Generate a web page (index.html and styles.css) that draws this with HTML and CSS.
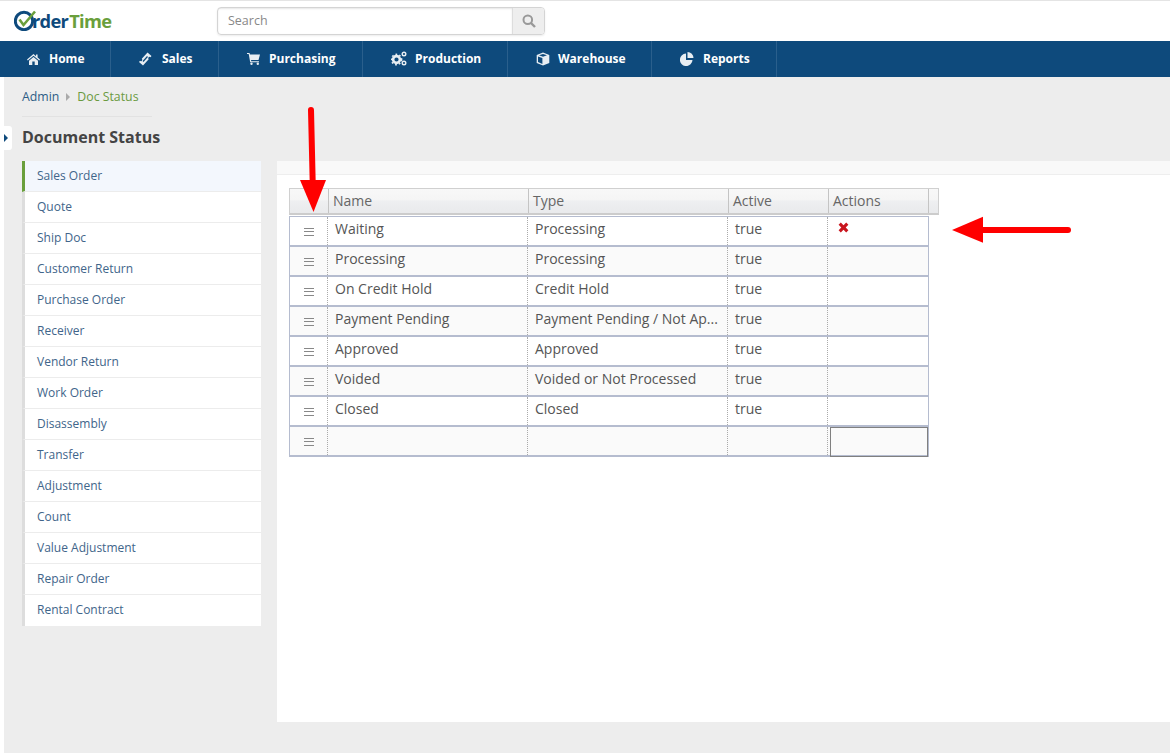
FILE: index.html
```html
<!DOCTYPE html>
<html lang="en">
<head>
<meta charset="utf-8">
<title>Document Status</title>
<link rel="stylesheet" href="styles.css">
</head>
<body>
<header class="topbar">
  <a class="logo">
    <svg class="logo-o" width="23" height="21" viewBox="0 0 23 21"><circle cx="10" cy="11" r="8.700" fill="none" stroke="#0e4a7c" stroke-width="3"/><path d="M5.500 9.500l4 5.500L21 1.500" fill="none" stroke="#6a9f3c" stroke-width="2.600"/></svg><span class="logo-a">rder</span><span class="logo-b">Time</span>
  </a>
  <div class="search">
    <div class="search-input">Search</div>
    <div class="search-btn"><svg width="14" height="14" viewBox="0 0 14 14"><circle cx="5.800" cy="5.800" r="4.300" fill="none" stroke="#999" stroke-width="2"/><path d="M9 9l4 4" stroke="#999" stroke-width="2.400"/></svg></div>
  </div>
</header>
<nav class="nav">
  <a class="nav-item nav-home"><svg width="13" height="12" viewBox="0 0 13 12"><path d="M6.500 1L0 6.600l.8.9L6.500 2.700l5.700 4.800.8-.9L10.600 4.500V1.500H9V3.200zM2 7.800V12h3.300V8.600h2.400V12H11V7.800L6.500 4z" fill="#e8eef3"/></svg>Home</a>
  <a class="nav-item nav-sales"><svg width="14" height="14" viewBox="0 0 14 14"><path d="M9.500.5l4 3.500-1 1.200a1.300 1.300 0 0 0-1.800 2L5 13.500l-4-3.500 1-1.200a1.300 1.300 0 0 0 1.800-2z" fill="#e8eef3"/><path d="M5 9.500l4.500-5" stroke="#0e4a7c" stroke-width="1.200" fill="none"/></svg>Sales</a>
  <a class="nav-item nav-purch"><svg width="13" height="12" viewBox="0 0 13 12"><path d="M0 0h2.500l.5 1.500h10L11.500 7H4l.3 1.300H12v1H3.200L1.700 1H0z" fill="#e8eef3"/><circle cx="4.500" cy="10.800" r="1.200" fill="#e8eef3"/><circle cx="10.800" cy="10.800" r="1.200" fill="#e8eef3"/></svg>Purchasing</a>
  <a class="nav-item nav-prod"><svg width="16" height="15" viewBox="0 0 16 15"><circle cx="5.500" cy="8.500" r="3.400" fill="none" stroke="#e8eef3" stroke-width="2.600"/><circle cx="5.500" cy="8.500" r="5.200" fill="none" stroke="#e8eef3" stroke-width="1.400" stroke-dasharray="1.800 2"/><circle cx="13" cy="3" r="1.800" fill="none" stroke="#e8eef3" stroke-width="1.400"/><circle cx="13" cy="12" r="1.800" fill="none" stroke="#e8eef3" stroke-width="1.400"/></svg>Production</a>
  <a class="nav-item nav-ware"><svg width="14" height="14" viewBox="0 0 14 14"><path d="M7 .5l6.300 2.400v8L7 13.500.7 10.900v-8zM7 1.900L3 3.300 7 4.800l4-1.500zM2 4.400v5.700l4.400 1.900V6.100z" fill="#e8eef3" fill-rule="evenodd"/></svg>Warehouse</a>
  <a class="nav-item nav-rep"><svg width="14" height="14" viewBox="0 0 14 14"><path d="M6 1.500V8h6.500A6.300 6.300 0 1 1 6 1.500z" fill="#e8eef3"/><path d="M7.500 0a6 6 0 0 1 6 6h-6z" fill="#e8eef3"/></svg>Reports</a>
</nav>
<div class="page">
  <aside class="side">
    <div class="crumbs"><span class="crumb-a">Admin</span><i class="crumb-sep"></i><span class="crumb-b">Doc Status</span></div>
    <h1 class="title">Document Status</h1>
    <ul class="menu">
      <li class="menu-item is-active">Sales Order</li>
      <li class="menu-item">Quote</li>
      <li class="menu-item">Ship Doc</li>
      <li class="menu-item">Customer Return</li>
      <li class="menu-item">Purchase Order</li>
      <li class="menu-item">Receiver</li>
      <li class="menu-item">Vendor Return</li>
      <li class="menu-item">Work Order</li>
      <li class="menu-item">Disassembly</li>
      <li class="menu-item">Transfer</li>
      <li class="menu-item">Adjustment</li>
      <li class="menu-item">Count</li>
      <li class="menu-item">Value Adjustment</li>
      <li class="menu-item">Repair Order</li>
      <li class="menu-item">Rental Contract</li>
    </ul>
  </aside>
  <main class="panel">
    <div class="panel-head"></div>
    <div class="grid">
      <div class="grid-head">
        <div class="hc hc-drag"></div><div class="hc hc-wide">Name</div><div class="hc hc-wide">Type</div><div class="hc hc-narrow">Active</div><div class="hc hc-narrow">Actions</div><div class="hc hc-fill"></div>
      </div>
      <div class="grid-body">
        <div class="row"><div class="c c-drag"><i class="drag"></i></div><div class="c c-wide">Waiting</div><div class="c c-wide">Processing</div><div class="c c-narrow">true</div><div class="c c-narrow c-last"><svg class="del" width="11" height="11" viewBox="0 0 11 11"><path d="M2.800.6L5.500 3.300 8.200.6l2.200 2.200-2.700 2.700 2.700 2.700-2.200 2.200-2.700-2.700-2.700 2.700L.6 8.200l2.700-2.700L.6 2.800z" fill="#c9161f"/></svg></div></div>
        <div class="row alt"><div class="c c-drag"><i class="drag"></i></div><div class="c c-wide">Processing</div><div class="c c-wide">Processing</div><div class="c c-narrow">true</div><div class="c c-narrow c-last"></div></div>
        <div class="row"><div class="c c-drag"><i class="drag"></i></div><div class="c c-wide">On Credit Hold</div><div class="c c-wide">Credit Hold</div><div class="c c-narrow">true</div><div class="c c-narrow c-last"></div></div>
        <div class="row alt"><div class="c c-drag"><i class="drag"></i></div><div class="c c-wide">Payment Pending</div><div class="c c-wide">Payment Pending / Not Ap...</div><div class="c c-narrow">true</div><div class="c c-narrow c-last"></div></div>
        <div class="row"><div class="c c-drag"><i class="drag"></i></div><div class="c c-wide">Approved</div><div class="c c-wide">Approved</div><div class="c c-narrow">true</div><div class="c c-narrow c-last"></div></div>
        <div class="row alt"><div class="c c-drag"><i class="drag"></i></div><div class="c c-wide">Voided</div><div class="c c-wide">Voided or Not Processed</div><div class="c c-narrow">true</div><div class="c c-narrow c-last"></div></div>
        <div class="row"><div class="c c-drag"><i class="drag"></i></div><div class="c c-wide">Closed</div><div class="c c-wide">Closed</div><div class="c c-narrow">true</div><div class="c c-narrow c-last"></div></div>
        <div class="row alt"><div class="c c-drag"><i class="drag"></i></div><div class="c c-wide"></div><div class="c c-wide"></div><div class="c c-narrow"></div><div class="c c-narrow c-last"><div class="focus"></div></div></div>
      </div>
    </div>
  </main>
</div>
<div class="toggle"><i class="toggle-tri"></i></div>
<svg class="arrow arrow-down" width="28" height="108" viewBox="0 0 28 108"><path d="M12 5l1.700 72" stroke="#f00" stroke-width="6" stroke-linecap="round" fill="none"/><path d="M1 75h26L14.500 107z" fill="#f00"/></svg>
<svg class="arrow arrow-left" width="122" height="28" viewBox="0 0 122 28"><path d="M30 14h88" stroke="#f00" stroke-width="6" stroke-linecap="round" fill="none"/><path d="M33 .7v26L2 14z" fill="#f00"/></svg>
</body>
</html>
```
FILE: styles.css
```css
* { box-sizing: border-box; }
html, body { margin: 0; height: 100%; }
body {
  width: 1170px;
  height: 753px;
  overflow: hidden;
  position: relative;
  background: #fff;
  font-family: "Open Sans", "Noto Sans", sans-serif;
  color: #555;
}
.topbar {
  height: 41px;
  display: flex;
  align-items: flex-start;
  border-top: 1px solid #e4e4e4;
  background: #fff;
}
.logo {
  display: flex;
  align-items: center;
  width: 217px;
  padding: 9px 0 0 14px;
  font-weight: 700;
  font-size: 18.300px;
  line-height: 21px;
  letter-spacing: -0.7px;
}
.logo-o { margin-right: -5px; flex: none; }
.logo-a { color: #0e4a7c; }
.logo-b { color: #6a9f3c; margin-left: 1px; }
.search {
  display: flex;
  width: 328px;
  height: 28px;
  margin-top: 6px;
  border: 1px solid #d4d4d4;
  border-radius: 4px;
  box-shadow: 0 1px 2px rgba(0,0,0,.08);
  overflow: hidden;
}
.search-input {
  flex: 1;
  padding-left: 10px;
  font-size: 12.500px;
  line-height: 26px;
  color: #888;
  box-shadow: inset 0 1px 2px rgba(0,0,0,.1);
}
.search-btn {
  width: 32px;
  display: flex;
  align-items: center;
  justify-content: center;
  background: #eee;
  border-left: 1px solid #ddd;
}
.nav {
  display: flex;
  height: 36px;
  background: #0e4a7c;
}
.nav-item {
  display: flex;
  align-items: center;
  height: 36px;
  border-right: 1px solid #2a5f8c;
  color: #fff;
  font-size: 12px;
  font-weight: 700;
  padding-bottom: 1px;
}
.nav-home { width: 111px; padding-left: 27px; gap: 9px; }
.nav-sales { width: 108px; padding-left: 27px; gap: 10px; }
.nav-purch { width: 144px; padding-left: 28px; gap: 9px; }
.nav-prod { width: 145px; padding-left: 28px; gap: 8px; }
.nav-ware { width: 144px; padding-left: 28px; gap: 8px; }
.nav-rep { width: 125px; padding-left: 28px; gap: 9px; }
.page {
  height: 676px;
  margin-left: 4px;
  background: #ededed;
  display: flex;
  padding: 0 0 31px 18px;
}
.side { width: 255px; flex: none; }
.crumbs {
  display: flex;
  align-items: center;
  width: 130px;
  height: 40px;
  border-bottom: 1px solid #e2e2e2;
  font-size: 12.300px;
}
.crumb-a { color: #2d5d86; }
.crumb-b { color: #6a9a3f; }
.crumb-sep {
  width: 0;
  height: 0;
  margin: 0 7px 0 7px;
  border-left: 4px solid #aaa;
  border-top: 4px solid transparent;
  border-bottom: 4px solid transparent;
}
.title {
  margin: 9px 0 12px;
  font-size: 16px;
  line-height: 23px;
  font-weight: 700;
  color: #444;
}
.menu {
  list-style: none;
  margin: 0;
  padding: 0;
  width: 239px;
  background: #fff;
}
.menu-item {
  height: 31px;
  padding-left: 12px;
  border-left: 3px solid #ddd;
  border-bottom: 1px solid #ececec;
  font-size: 12px;
  line-height: 29px;
  color: #41658a;
}
.menu-item:last-child { border-bottom: 0; }
.is-active { background: #f3f7fd; border-left-color: #6a9f3c; }
.panel {
  flex: 1;
  margin-top: 84px;
  background: #fff;
}
.panel-head {
  height: 14px;
  background: #f9f9f9;
  border-bottom: 1px solid #eee;
}
.grid {
  margin: 13px 0 0 12px;
  width: 650px;
}
.grid-head {
  display: flex;
  height: 27px;
  border: 1px solid #d0d0d0;
  border-bottom: 2px solid #ccc;
  background: linear-gradient(#f8f8f8 0, #f5f5f5 45%, #eeeff1 50%, #e9eaec 100%);
  font-size: 14px;
  line-height: 23px;
  color: #666;
}
.hc { padding-left: 4px; border-right: 1px solid #c4c4c4; }
.hc-drag { width: 39px; flex: none; }
.hc-wide { width: 200px; flex: none; }
.hc-narrow { width: 100px; flex: none; }
.hc-fill { flex: 1; border-right: 0; }
.grid-body {
  width: 640px;
  margin-top: 1px;
  border-top: 1px solid #b5bccf;
  border-left: 1px solid #b5bccf;
  border-right: 1px solid #b5bccf;
}
.row {
  display: flex;
  height: 30px;
  border-bottom: 2px solid #b5bccf;
  background: #fff;
  font-size: 14px;
  line-height: 24px;
  color: #555;
}
.row.alt { background: #fafafa; }
.c {
  flex: none;
  height: 28px;
  padding-left: 7px;
  border-right: 1px dotted #aaa;
  position: relative;
}
.c-drag { width: 38px; padding: 2px 0 0; display: flex; align-items: center; justify-content: center; }
.c-wide { width: 200px; }
.c-narrow { width: 100px; }
.c-last { border-right: 0; width: 100px; }
.drag {
  display: block;
  width: 10px;
  height: 8px;
  border-top: 1px solid #888;
  border-bottom: 1px solid #888;
  position: relative;
}
.drag::after {
  content: "";
  position: absolute;
  left: 0;
  right: 0;
  top: 2px;
  height: 1px;
  background: #888;
}
.del { display: block; position: relative; top: 5px; left: 3px; }
.focus {
  position: absolute;
  left: 2px;
  top: 0;
  width: 98px;
  height: 30px;
  border: 1px solid #808080;
}
.toggle {
  position: absolute;
  left: 0;
  top: 126px;
  width: 12px;
  height: 24px;
  background: #fff;
  border-radius: 0 3px 3px 0;
  display: flex;
  align-items: center;
  padding-left: 4px;
}
.toggle-tri {
  border-left: 4px solid #0e4a7c;
  border-top: 4px solid transparent;
  border-bottom: 4px solid transparent;
}
.arrow { position: absolute; }
.arrow-down { left: 299px; top: 105px; }
.arrow-left { left: 950px; top: 216px; }
```
